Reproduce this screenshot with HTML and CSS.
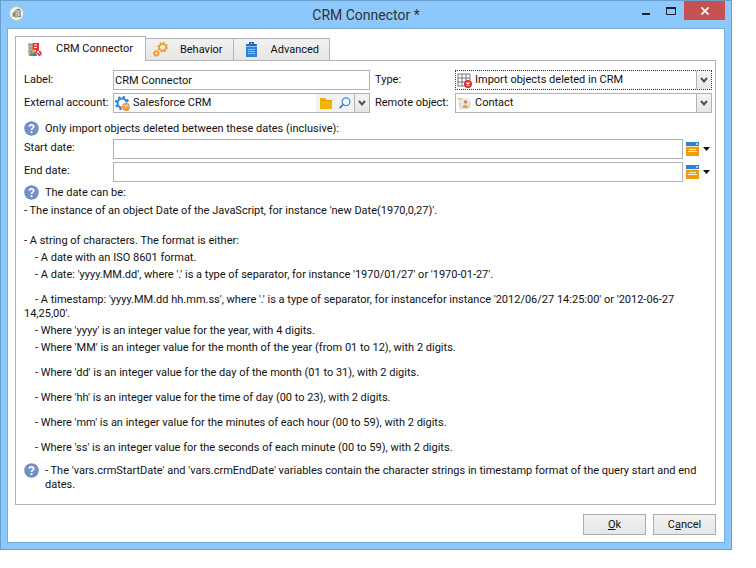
FILE: index.html
```html
<!DOCTYPE html>
<html lang="en">
<head>
<meta charset="utf-8">
<title>CRM Connector</title>
<link rel="stylesheet" href="styles.css">
</head>
<body>
<svg class="defs" aria-hidden="true">
  <symbol id="help" viewBox="0 0 15 15"><circle cx="7.5" cy="7.5" r="7.3" fill="#7390c4"/><path d="M5.3 5.7C5.4 3.2 9.8 3.2 9.7 5.7C9.7 7.2 7.5 7.2 7.5 9.1" fill="none" stroke="#fff" stroke-width="1.7"/><rect x="6.6" y="10.2" width="1.8" height="1.8" fill="#fff"/></symbol>
  <symbol id="chev" viewBox="0 0 8 6"><path d="M1 1L4 4.4L7 1" fill="none" stroke="#505050" stroke-width="2"/></symbol>
  <symbol id="cal" viewBox="0 0 13 14"><rect width="13" height="4" fill="#2b83d6"/><rect x="10" y="1" width="2" height="2" fill="#a9d0f3"/><rect y="4" width="13" height="1" fill="#fbe3b5"/><rect y="5" width="13" height="9" fill="#f39a0c"/><path d="M3 7.5H10M2 9.5H11" stroke="#fff0d0"/></symbol>
  <symbol id="caret" viewBox="0 0 7 4"><path d="M0 0H7L3.5 4Z" fill="#111"/></symbol>
</svg>
<main class="window">
  <header class="titlebar">
    <svg class="app-icon" viewBox="0 0 15 15"><circle cx="7.5" cy="7.5" r="7" fill="#f5f7ee" stroke="#b6cf8a"/><path d="M3.5 11V7L6 5.5V10.5Z" fill="#888"/><path d="M6 4.5L9 3V10.5L6.5 11.5Z" fill="#bbb" stroke="#777" stroke-width=".6"/><path d="M9 3L11 4V11L9.5 10.5" fill="none" stroke="#555"/></svg>
    <h1 class="title">CRM Connector *</h1>
    <div class="controls">
      <button class="ctl" aria-label="Minimize"><svg width="8" height="10"><rect y="7" width="8" height="2" fill="#222"/></svg></button>
      <button class="ctl" aria-label="Maximize"><svg width="10" height="8"><path d="M.5 0V7.5H9.5V0" fill="none" stroke="#222"/><rect width="10" height="2" fill="#222"/></svg></button>
      <button class="ctl close" aria-label="Close"><svg width="8" height="8"><path d="M.5 .5L7.5 7.5M7.5 .5L.5 7.5" stroke="#fff" stroke-width="1.7"/></svg></button>
    </div>
  </header>
  <div class="client">
    <div class="tabs" role="tablist">
      <button class="tab active" role="tab" aria-selected="true"><svg viewBox="0 0 15 15"><rect x="0" y="1" width="6" height="12" fill="#c2bbb2"/><path d="M1 3H4M1 6H4M1 9H4" stroke="#827c76"/><path d="M4.5 1H11V8H4.5Z" fill="#e3323b"/><path d="M6 3H9M6 5.5H9" stroke="#fff"/><path d="M1 14L4 8L7 14Z" fill="#5b9d4a"/><path d="M5 14L7 8L9 14Z" fill="#3578c8"/><path d="M4 9L6 7L7 10L5 12Z" fill="#f0a030"/><path d="M8 7L13 9.5L14 13L11 14L8 11Z" fill="#dc2b34"/><path d="M9 9L12.5 12.5M11.5 8.5L9 11.5" stroke="#fff" stroke-width=".9"/></svg><span>CRM Connector</span></button>
      <button class="tab" role="tab" aria-selected="false"><svg viewBox="0 0 15 15"><g fill="none" stroke="#f39a16"><circle cx="9.6" cy="5.2" r="3.4" stroke-width="1.7"/><circle cx="9.6" cy="5.2" r="4.7" stroke-width="1.3" stroke-dasharray="1.7 1.99"/><circle cx="3.3" cy="11.4" r="2" stroke-width="1.5"/><circle cx="3.3" cy="11.4" r="3" stroke-width="1" stroke-dasharray="1.2 1.156"/></g></svg><span>Behavior</span></button>
      <button class="tab" role="tab" aria-selected="false"><svg viewBox="0 0 15 15"><path d="M2 2H13V15H2Z" fill="#2f82d5"/><path d="M5 0H10V2H12V4H3V2H5Z" fill="#1f68b4"/><path d="M2 4.5H13" stroke="#8fc0ec"/><path d="M4 7.5H11M4 9.5H11M4 11.5H11" stroke="#8fc0ec"/><rect x="7" y="1" width="1" height="1" fill="#fff"/></svg><span>Advanced</span></button>
    </div>
    <section class="panel">
      <div class="form">
        <label for="label">Label:</label>
        <input id="label" class="box" value="CRM Connector">
        <label for="type">Type:</label>
        <div class="box focus">
          <svg class="ico" viewBox="0 0 15 15"><path d="M.5 1H13M.5 5H13M.5 9H8M.5 13H8M1 1V13M5 1V13M9 1V8M13 1V7" fill="none" stroke="#77777a"/><circle cx="11" cy="11" r="4" fill="#dc2f35"/><path d="M9.5 9.5L12.5 12.5M12.5 9.5L9.5 12.5" stroke="#fff" stroke-width="1.2"/></svg>
          <select id="type"><option>Import objects deleted in CRM</option></select>
          <span class="drop"><svg><use href="#chev"/></svg></span>
        </div>
        <label for="account">External account:</label>
        <div class="box">
          <svg class="ico" viewBox="0 0 15 15"><circle cx="7" cy="7" r="4.5" fill="none" stroke="#2f82d5" stroke-width="2"/><circle cx="7" cy="7" r="6.2" fill="none" stroke="#2f82d5" stroke-width="1.8" stroke-dasharray="2.4 2.47"/><circle cx="11" cy="11" r="4.5" fill="#fff"/><circle cx="11" cy="11" r="3.9" fill="#e99532"/><path d="M8 10L10 9L11 11L10 13M12 8L12 10L14 11" fill="none" stroke="#fbe0b8" stroke-width=".9"/></svg>
          <input id="account" value="Salesforce CRM">
          <button class="tool" aria-label="Open folder"><svg width="12" height="11" viewBox="0 0 12 11"><path d="M0 0H6V2H12V11H0Z" fill="#f3b300"/><path d="M0 2.5H12" stroke="#e2a000"/></svg></button>
          <button class="tool" aria-label="Search"><svg width="12" height="12" viewBox="0 0 12 12"><circle cx="7" cy="4.7" r="3.9" fill="#f5faff" stroke="#478fd5" stroke-width="1.3"/><path d="M4 7.5L.7 11.3" stroke="#3179c0" stroke-width="1.7"/></svg></button>
          <button class="drop" aria-label="Show accounts"><svg><use href="#chev"/></svg></button>
        </div>
        <label for="remote">Remote object:</label>
        <div class="box">
          <svg class="ico" viewBox="0 0 15 15"><path d="M1 2.5L10 2L13.5 4L12.5 13L3 14Z" fill="#e9e8e4"/><path d="M1 3L5 2.5" stroke="#e8b984" stroke-width="1.5"/><circle cx="8.5" cy="6" r="1.7" fill="#c98a58"/><path d="M5.5 12C5.5 7.5 11 7.5 11 12Z" fill="#efa137"/><path d="M2.5 7L3.5 12M13 6L12 12" stroke="#c4c5ca"/></svg>
          <select id="remote"><option>Contact</option></select>
          <span class="drop"><svg><use href="#chev"/></svg></span>
        </div>
      </div>
      <div class="hint"><svg><use href="#help"/></svg><p>Only import objects deleted between these dates (inclusive):</p></div>
      <div class="dates">
        <label for="start">Start date:</label><input id="start" class="box"><button class="pick" aria-label="Pick start date"><svg width="13" height="14"><use href="#cal"/></svg><svg width="7" height="4"><use href="#caret"/></svg></button>
        <label for="end">End date:</label><input id="end" class="box"><button class="pick" aria-label="Pick end date"><svg width="13" height="14"><use href="#cal"/></svg><svg width="7" height="4"><use href="#caret"/></svg></button>
      </div>
      <div class="hint"><svg><use href="#help"/></svg><p>The date can be:</p></div>
      <div class="notes">
        <p>- The instance of an object Date of the JavaScript, for instance 'new Date(1970,0,27)'.</p>
        <p class="wide">- A string of characters. The format is either:</p>
        <p class="sub">- A date with an ISO 8601 format.</p>
        <p class="sub">- A date: 'yyyy.MM.dd', where '.' is a type of separator, for instance '1970/01/27' or '1970-01-27'.</p>
        <p class="sub gap">- A timestamp: 'yyyy.MM.dd hh.mm.ss', where '.' is a type of separator, for instancefor instance '2012/06/27 14:25:00' or '2012-06-27 14,25,00'.</p>
        <p class="sub">- Where 'yyyy' is an integer value for the year, with 4 digits.</p>
        <p class="sub">- Where 'MM' is an integer value for the month of the year (from 01 to 12), with 2 digits.</p>
        <p class="sub gap">- Where 'dd' is an integer value for the day of the month (01 to 31), with 2 digits.</p>
        <p class="sub gap">- Where 'hh' is an integer value for the time of day (00 to 23), with 2 digits.</p>
        <p class="sub gap">- Where 'mm' is an integer value for the minutes of each hour (00 to 59), with 2 digits.</p>
        <p class="sub gap">- Where 'ss' is an integer value for the seconds of each minute (00 to 59), with 2 digits.</p>
      </div>
      <div class="hint"><svg><use href="#help"/></svg><p>- The 'vars.crmStartDate' and 'vars.crmEndDate' variables contain the character strings in timestamp format of the query start and end dates.</p></div>
    </section>
    <footer class="actions"><button class="btn"><u>O</u>k</button><button class="btn">C<u>a</u>ncel</button></footer>
  </div>
</main>
</body>
</html>
```
FILE: styles.css
```css
* { box-sizing: border-box; }
body { margin: 0; background: #fff; color: #111; font: 11px/14px Roboto, "Open Sans", sans-serif; }
button, input, select { font: inherit; color: inherit; margin: 0; padding: 0; border: 0; background: none; border-radius: 0; outline: 0; }
p, h1 { margin: 0; }
svg { display: block; flex: none; }
.defs { display: none; }
.window { margin-right: 24px; padding: 0 6px 6px; background: #8cc8fb; border: 1px solid #6a9fcb; }
.titlebar { display: grid; grid-template-columns: 1fr auto 1fr; height: 27px; }
.app-icon { width: 15px; height: 15px; margin: 5px 0 0 2px; }
.title { font-size: 14px; line-height: 28px; font-weight: 400; color: #333; }
.controls { display: flex; justify-content: flex-end; height: 19px; }
.ctl { width: 25px; display: flex; align-items: center; justify-content: center; }
.close { width: 41px; margin-left: 1px; background: #c75050; }
.client { background: #fff; border: 1px solid #79aedb; padding: 7px 8px; }
.tabs { display: flex; align-items: flex-end; margin-bottom: -1px; }
.client { padding-left: 7px; }
.tab { position: relative; height: 23px; display: flex; align-items: center; gap: 12px; padding: 0 10px 0 7px; border: 1px solid #b4b4b4; border-left-width: 0; background: linear-gradient(#f1f1f1, #e6e6e6); }
.tab:last-child { padding-left: 10px; }
.tab.active { height: 25px; gap: 13px; padding: 0 12px; border-left-width: 1px; border-bottom: 0; background: #fff; }
.tab svg { width: 15px; height: 15px; }
.panel { border: 1px solid #b4b4b4; padding: 9px 3px 12px 8px; }
.form { display: grid; grid-template-columns: 89px 1fr 85px 1fr; row-gap: 3px; line-height: 20px; white-space: nowrap; }
.form > label:nth-of-type(even) { padding-left: 5px; }
.box { display: flex; align-items: center; min-width: 0; height: 20px; border: 1px solid #b0b2b8; background: #fff; line-height: 16px; padding-left: 1px; }
.box > input, .box > select { flex: 1; min-width: 0; appearance: none; padding-left: 3px; height: 16px; }
.focus { border: 1px dotted #333; }
.ico { width: 15px; height: 15px; }
.tool { width: 19px; height: 18px; display: flex; align-items: center; justify-content: center; background: #f2f2f2; }
.drop { width: 15px; height: 18px; display: flex; align-items: center; justify-content: center; border-left: 1px solid #b0b2b8; background: linear-gradient(#f4f4f4, #e6e6e6); }
.drop svg { width: 8px; height: 6px; }
.hint { display: flex; gap: 6px; margin-top: 8px; }
.hint svg { width: 15px; height: 15px; }
.hint p { padding-top: 1px; }
.dates { display: grid; grid-template-columns: 89px 1fr 29px; row-gap: 3px; margin-top: 3px; }
.dates label { line-height: 18px; }
.dates + .hint { margin-top: 3px; }
.pick { display: flex; align-items: center; gap: 4px; padding-left: 3px; }
.notes { display: flex; flex-direction: column; gap: 3px; margin-top: 4px; }
.notes .wide { margin-top: 13px; }
.notes .sub { text-indent: 11px; }
.notes .gap { margin-top: 8px; }
.actions { display: flex; justify-content: flex-end; gap: 7px; margin-top: 9px; }
.btn { width: 63px; height: 21px; border: 1px solid #acacac; background: linear-gradient(#f1f1f1, #e6e6e6); }
```
